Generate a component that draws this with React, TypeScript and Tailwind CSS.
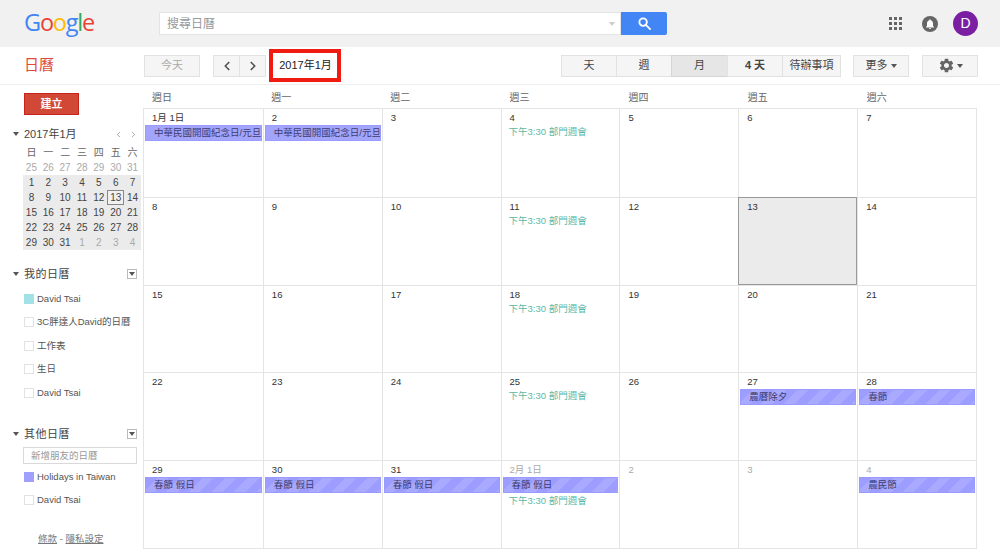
import { ChevronLeft, ChevronRight } from "lucide-react";
import { MdSettings, MdNotifications } from "react-icons/md";

const FONT = "font-['Liberation_Sans','Noto_Sans_CJK_TC',sans-serif]";

type Ev = { label: string; striped?: boolean };
type Cell = { date: string; muted?: boolean; bar?: Ev; meeting?: boolean; today?: boolean };

const WEEKDAYS = ["週日", "週一", "週二", "週三", "週四", "週五", "週六"];

const MEETING = "下午3:30 部門週會";

const CELLS: Cell[] = [
  { date: "1月 1日", bar: { label: "中華民國開國紀念日/元旦" } },
  { date: "2", bar: { label: "中華民國開國紀念日/元旦" } },
  { date: "3" },
  { date: "4", meeting: true },
  { date: "5" },
  { date: "6" },
  { date: "7" },
  { date: "8" },
  { date: "9" },
  { date: "10" },
  { date: "11", meeting: true },
  { date: "12" },
  { date: "13", today: true },
  { date: "14" },
  { date: "15" },
  { date: "16" },
  { date: "17" },
  { date: "18", meeting: true },
  { date: "19" },
  { date: "20" },
  { date: "21" },
  { date: "22" },
  { date: "23" },
  { date: "24" },
  { date: "25", meeting: true },
  { date: "26" },
  { date: "27", bar: { label: "農曆除夕", striped: true } },
  { date: "28", bar: { label: "春節", striped: true } },
  { date: "29", bar: { label: "春節 假日", striped: true } },
  { date: "30", bar: { label: "春節 假日", striped: true } },
  { date: "31", bar: { label: "春節 假日", striped: true } },
  { date: "2月 1日", muted: true, bar: { label: "春節 假日", striped: true }, meeting: true },
  { date: "2", muted: true },
  { date: "3", muted: true },
  { date: "4", muted: true, bar: { label: "農民節", striped: true } },
];

const MINI_HEAD = ["日", "一", "二", "三", "四", "五", "六"];
const MINI_PREV = [25, 26, 27, 28, 29, 30, 31];
const MINI_DAYS = [
  1, 2, 3, 4, 5, 6, 7, 8, 9, 10, 11, 12, 13, 14, 15, 16, 17, 18, 19, 20, 21, 22, 23, 24, 25, 26, 27, 28, 29, 30, 31,
];
const MINI_NEXT = [1, 2, 3, 4];

const Caret = ({ className = "" }: { className?: string }) => (
  <span className={`inline-block w-0 h-0 border-x-[3px] border-x-transparent border-t-[4px] ${className}`} />
);

const CalItem = ({ label, color }: { label: string; color?: string }) => (
  <div className="flex items-center h-[23.5px] pl-6 gap-[3px] text-[9.5px] text-[#555]">
    <span className={`w-[10px] h-[10px] border ${color ? color : "border-[#e2e2e2] bg-white"}`} />
    <span className="whitespace-nowrap">{label}</span>
  </div>
);

const SectionHead = ({ title }: { title: string }) => (
  <div className="flex items-center h-4 pl-[13px] pr-[7px] text-[11px] text-[#444]">
    <Caret className="border-t-[#555] mr-[5px]" />
    <span className="tracking-[0.5px]">{title}</span>
    <span className="ml-auto w-[10px] h-[10px] border border-[#bbb] flex items-center justify-center">
      <Caret className="border-t-[#555]" />
    </span>
  </div>
);

const MiniCalendar = () => (
  <div className="ml-[23px] w-[118px] text-[10px] text-[#444] text-center">
    <div className="grid grid-cols-7 h-[15px] items-center text-[#666]">
      {MINI_HEAD.map((d) => (
        <span key={d}>{d}</span>
      ))}
    </div>
    <div className="grid grid-cols-7 h-[15px] items-center text-[#aaa]">
      {MINI_PREV.map((d) => (
        <span key={d}>{d}</span>
      ))}
    </div>
    <div className="grid grid-cols-7 auto-rows-[15px] items-center bg-[#ebebeb]">
      {MINI_DAYS.map((d) =>
        d === 13 ? (
          <span key={d} className="h-[15px] leading-[13px] border border-[#888] bg-[#f1f1f1]">
            {d}
          </span>
        ) : (
          <span key={d}>{d}</span>
        )
      )}
      {MINI_NEXT.map((d) => (
        <span key={`n${d}`} className="text-[#aaa]">
          {d}
        </span>
      ))}
    </div>
  </div>
);

const Sidebar = () => (
  <aside className="w-[144px] shrink-0 pt-[8px]">
    <button className="block ml-6 w-[55px] h-[22px] bg-[#d14836] border border-[#c5231c] text-white text-[11px] font-bold">
      建立
    </button>
    <div className="flex items-center h-4 mt-[11px] pl-[13px] pr-[6px] text-[11px] text-[#444]">
      <Caret className="border-t-[#555] mr-[5px]" />
      <span>2017年1月</span>
      <ChevronLeft className="ml-auto text-[#888]" size={9} />
      <ChevronRight className="ml-[6px] text-[#888]" size={9} />
    </div>
    <div className="mt-[3px]">
      <MiniCalendar />
    </div>
    <div className="mt-[16px]">
      <SectionHead title="我的日曆" />
    </div>
    <div className="mt-[5px]">
      <CalItem label="David Tsai" color="bg-[#a0e2e6] border-[#a0e2e6]" />
      <CalItem label="3C胖達人David的日曆" />
      <CalItem label="工作表" />
      <CalItem label="生日" />
      <CalItem label="David Tsai" />
    </div>
    <div className="mt-[21.5px]">
      <SectionHead title="其他日曆" />
    </div>
    <div className="ml-[23px] mt-[5px] w-[114px] h-[17px] border border-[#d9d9d9] pl-[7px] text-[9.5px] leading-[15px] text-[#999]">
      新增朋友的日曆
    </div>
    <div className="mt-[1px]">
      <CalItem label="Holidays in Taiwan" color="bg-[#9fa0fb] border-[#9fa0fb]" />
      <CalItem label="David Tsai" />
    </div>
    <div className="mt-[20px] ml-[38px] text-[9.5px] text-[#777] whitespace-nowrap">
      <span className="underline">條款</span> - <span className="underline">隱私設定</span>
    </div>
  </aside>
);

const DayCell = ({ cell, index }: { cell: Cell; index: number }) => (
  <div
    className={`min-w-0 overflow-hidden ${index % 7 === 0 ? "" : "border-l"} ${index < 7 ? "" : "border-t"} ${
      cell.today ? "bg-[#ebebeb] outline outline-[#999] -outline-offset-1" : ""
    } border-[#e4e4e4] pt-[2px]`}
  >
    <div className={`pl-[8px] h-[13px] text-[9.5px] leading-[13px] ${cell.muted ? "text-[#aaa]" : "text-[#333]"}`}>
      {cell.date}
    </div>
    {cell.bar && (
      <div
        className={`mt-[1px] mx-[1px] h-[16px] border border-[#9a9bff] pl-[8px] text-[9.5px] leading-[14px] text-[#3d3d70] whitespace-nowrap overflow-hidden ${
          cell.bar.striped
            ? "bg-[repeating-linear-gradient(135deg,#9c9dfe_0px,#9c9dfe_8px,#a9aaff_8px,#a9aaff_16px)]"
            : "bg-[#a3a4fc]"
        }`}
      >
        {cell.bar.label}
      </div>
    )}
    {cell.meeting && <div className="mt-[1px] pl-[7px] text-[9.5px] text-[#5cb8a6] whitespace-nowrap">{MEETING}</div>}
  </div>
);

const MonthView = () => (
  <main className="w-[834px] shrink-0 -ml-px">
    <div className="grid grid-cols-7 h-[23px] items-center text-[10px] text-[#666]">
      {WEEKDAYS.map((d) => (
        <span key={d} className="pl-[9px] pt-[2px]">
          {d}
        </span>
      ))}
    </div>
    <div className="grid grid-cols-7 auto-rows-[87.8px] border border-[#e4e4e4]">
      {CELLS.map((c, i) => (
        <DayCell key={i} cell={c} index={i} />
      ))}
    </div>
  </main>
);

const BTN = "h-[22px] border flex items-center justify-center text-[11px] text-[#444]";
const GREY_BTN = `${BTN} border-[#e2e2e2] bg-[#f5f5f5]`;
const ACTIVE_BTN = `${BTN} border-[#d5d5d5] bg-[#e6e6e6]`;

const Header = () => (
  <header className="h-[47px] bg-[#f1f1f1] flex items-center pl-6 pr-[22px]">
    <div className="w-[135px] text-[23.5px] leading-none tracking-[-1.2px] font-['Open_Sans',sans-serif] -mt-[2px]">
      <span className="text-[#4285f4]">G</span>
      <span className="text-[#ea4335]">o</span>
      <span className="text-[#fbbc05]">o</span>
      <span className="text-[#4285f4]">g</span>
      <span className="text-[#34a853]">l</span>
      <span className="text-[#ea4335]">e</span>
    </div>
    <div className="flex items-center w-[462px] h-[23px] bg-white border border-[#e4e4e4] pl-[7px] pr-[5px] text-[12px] text-[#999]">
      <span>搜尋日曆</span>
      <Caret className="ml-auto border-t-[#ccc]" />
    </div>
    <div className="w-[46px] h-[23px] bg-[#4285f4] rounded-r-[2px] flex items-center justify-center">
      <svg width="13" height="13" viewBox="0 0 14 14" fill="none" stroke="white" strokeWidth="2">
        <circle cx="5.5" cy="5.5" r="4" />
        <path d="M8.5 8.5 L13 13" strokeLinecap="round" />
      </svg>
    </div>
    <div className="ml-auto flex items-center">
      <svg width="14" height="14" viewBox="0 0 14 14" fill="#666">
        {[0, 5, 10].map((y) =>
          [0, 5, 10].map((x) => <rect key={`${x}-${y}`} x={x} y={y} width="3" height="3" />)
        )}
      </svg>
      <div className="ml-[19px] w-4 h-4 rounded-full bg-[#666] flex items-center justify-center">
        <MdNotifications className="text-white" size={12} />
      </div>
      <div className="ml-[15px] w-[25px] h-[25px] rounded-full bg-[#7b1fa2] flex items-center justify-center text-white text-[14px]">
        D
      </div>
    </div>
  </header>
);

const VIEWS = [
  { label: "天", w: "w-[56px]" },
  { label: "週", w: "w-[56px]" },
  { label: "月", w: "w-[57px]", active: true },
  { label: "4 天", w: "w-[56px]", bold: true },
  { label: "待辦事項", w: "w-[59px]" },
];

const Toolbar = () => (
  <div className="h-[38px] border-b border-[#eeeeee] flex items-center pl-6 pr-[22px]">
    <div className="w-[120px] text-[15px] text-[#dd4b39]">日曆</div>
    <div className={`${GREY_BTN} w-[56px] text-[#aaa]`}>今天</div>
    <div className="ml-[13px] flex">
      <div className={`${GREY_BTN} w-[27px]`}>
        <ChevronLeft size={14} strokeWidth={3} className="text-[#555]" />
      </div>
      <div className={`${GREY_BTN} w-[26px] border-l-0`}>
        <ChevronRight size={14} strokeWidth={3} className="text-[#555]" />
      </div>
    </div>
    <div className="ml-[4px] -translate-x-px w-[72px] h-[33px] pl-px border-4 border-[#f01c12] flex items-center justify-center text-[11px] text-[#222] whitespace-nowrap">
      2017年1月
    </div>
    <div className="ml-auto flex">
      {VIEWS.map((v) => (
        <div
          key={v.label}
          className={`${v.active ? ACTIVE_BTN : GREY_BTN} ${v.w} -ml-px ${v.bold ? "font-bold text-[#333]" : ""}`}
        >
          {v.label}
        </div>
      ))}
    </div>
    <div className={`${GREY_BTN} ml-[12px] w-[56px] gap-[3px]`}>
      更多 <Caret className="border-t-[#555]" />
    </div>
    <div className={`${GREY_BTN} ml-[13px] w-[56px] gap-[2px]`}>
      <MdSettings size={17} className="text-[#666]" />
      <Caret className="border-t-[#555]" />
    </div>
  </div>
);

export default function App() {
  return (
    <div className={`w-[1000px] h-[549px] overflow-hidden bg-white ${FONT}`}>
      <Header />
      <Toolbar />
      <div className="flex">
        <Sidebar />
        <MonthView />
      </div>
    </div>
  );
}
